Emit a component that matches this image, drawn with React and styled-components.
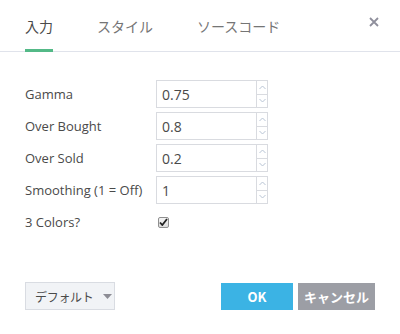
import React from "react";
import styled, { createGlobalStyle } from "styled-components";

const Global = createGlobalStyle`
  html, body { margin: 0; padding: 0; background: #fff; }
  body { font-family: "Open Sans", "Noto Sans CJK JP", sans-serif; }
  * { box-sizing: border-box; }
`;

const Dialog = styled.div`
  width: 400px;
  height: 334px;
  background: #fff;
  display: flex;
  flex-direction: column;
`;

const Header = styled.div`
  height: 52px;
  border-bottom: 1px solid #e0e3eb;
  display: flex;
  align-items: stretch;
  padding-left: 25px;
  padding-right: 21px;
`;

const Tab = styled.div`
  font-family: "Noto Sans CJK JP", sans-serif;
  font-size: 14px;
  color: ${(p) => (p.$active ? "#4a4a4a" : "#757575")};
  margin-right: 44px;
  display: flex;
  align-items: center;
  padding-top: 1px;
  position: relative;
  &::after {
    content: "";
    display: ${(p) => (p.$active ? "block" : "none")};
    position: absolute;
    left: 0;
    right: 0;
    bottom: -1px;
    height: 3px;
    background: #53b987;
  }
`;

const Close = styled.div`
  margin-left: auto;
  display: flex;
  align-items: center;
  padding-bottom: 8px;
`;

const Body = styled.div`
  padding: 28px 0 0 25px;
  display: grid;
  grid-template-columns: 131px 112px;
  grid-auto-rows: 28px;
  row-gap: 4px;
  align-items: center;
`;

const Label = styled.div`
  font-size: 13px;
  color: #4a4a4a;
  white-space: nowrap;
`;

const Field = styled.div`
  display: flex;
  height: 28px;
  border: 1px solid #d9dbe0;
  background: #fff;
`;

const Value = styled.div`
  flex: 1;
  font-size: 14px;
  color: #4a4a4a;
  padding-left: 5px;
  display: flex;
  align-items: center;
`;

const Spin = styled.div`
  width: 11px;
  border-left: 1px solid #d9dbe0;
  display: flex;
  flex-direction: column;
`;

const SpinHalf = styled.div`
  flex: 1;
  display: flex;
  align-items: center;
  justify-content: center;
  & + & { border-top: 1px solid #d9dbe0; }
`;

const CheckBox = styled.div`
  width: 11px;
  height: 11px;
  margin-left: 2px;
  border: 1px solid #8f8f8f;
  border-radius: 2px;
  background: linear-gradient(#f4f4f4, #dcdcdc);
  display: flex;
  align-items: center;
  justify-content: center;
`;

const Footer = styled.div`
  margin-top: auto;
  padding: 0 25px 24px 25px;
  display: flex;
  align-items: center;
`;

const DefaultButton = styled.div`
  width: 90px;
  height: 28px;
  border: 1px solid #d9dce2;
  background: #f1f3f6;
  display: flex;
  align-items: center;
  padding-left: 9px;
  gap: 9px;
  white-space: nowrap;
  font-family: "Noto Sans CJK JP", sans-serif;
  font-size: 12px;
  letter-spacing: -0.3px;
  color: #4a4a4a;
`;

const Action = styled.div`
  height: 27px;
  width: ${(p) => p.$w}px;
  margin-left: ${(p) => p.$ml}px;
  background: ${(p) => p.$bg};
  color: #fff;
  font-family: "Noto Sans CJK JP", "Open Sans", sans-serif;
  font-weight: 700;
  font-size: 13px;
  white-space: nowrap;
  display: flex;
  align-items: center;
  justify-content: center;
`;

const Chevron = ({ up }) => (
  <svg width="7" height="5" viewBox="0 0 7 5">
    <path
      d={up ? "M0.5 4 L3.5 1 L6.5 4" : "M0.5 1 L3.5 4 L6.5 1"}
      fill="none"
      stroke="#b8c4d4"
      strokeWidth="1"
    />
  </svg>
);

const rows = [
  ["Gamma", "0.75"],
  ["Over Bought", "0.8"],
  ["Over Sold", "0.2"],
  ["Smoothing (1 = Off)", "1"],
];

export default function App() {
  return (
    <>
      <Global />
      <Dialog>
        <Header>
          <Tab $active>入力</Tab>
          <Tab>スタイル</Tab>
          <Tab>ソースコード</Tab>
          <Close>
            <svg width="10" height="10" viewBox="0 0 10 10">
              <path d="M1 1 L9 9 M9 1 L1 9" stroke="#8f8f9c" strokeWidth="1.8" />
            </svg>
          </Close>
        </Header>
        <Body>
          {rows.map(([l, v]) => (
            <React.Fragment key={l}>
              <Label>{l}</Label>
              <Field>
                <Value>{v}</Value>
                <Spin>
                  <SpinHalf><Chevron up /></SpinHalf>
                  <SpinHalf><Chevron /></SpinHalf>
                </Spin>
              </Field>
            </React.Fragment>
          ))}
          <Label>3 Colors?</Label>
          <div>
            <CheckBox>
              <svg width="9" height="8" viewBox="0 0 9 8">
                <path d="M1 4.5 L3.3 7 L8 1" fill="none" stroke="#222" strokeWidth="1.8" />
              </svg>
            </CheckBox>
          </div>
        </Body>
        <Footer>
          <DefaultButton>
            デフォルト
            <svg width="9" height="5" viewBox="0 0 9 5">
              <path d="M0 0 L9 0 L4.5 5 Z" fill="#8d8d95" />
            </svg>
          </DefaultButton>
          <Action $w={72} $ml={106} $bg="#3bb3e4">OK</Action>
          <Action $w={77} $ml={5} $bg="#9c9ea5">キャンセル</Action>
        </Footer>
      </Dialog>
    </>
  );
}
